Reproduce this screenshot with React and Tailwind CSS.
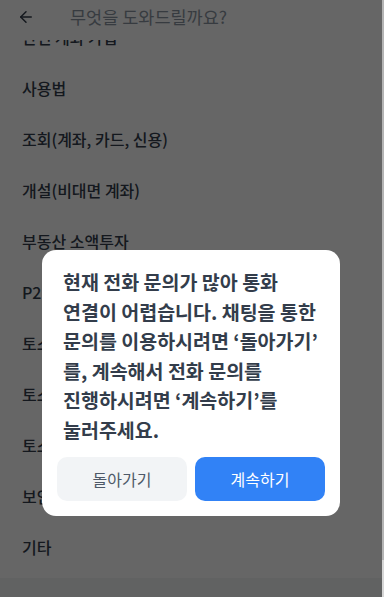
import { ArrowLeft } from 'lucide-react';

const menuItems = [
  '간편 계좌 가입',
  '사용법',
  '조회(계좌, 카드, 신용)',
  '개설(비대면 계좌)',
  '부동산 소액투자',
  'P2P 투자',
  '토스 카드',
  '토스 보험',
  '토스 증권',
  '보안 및 인증',
  '기타',
];

const App = () => {
  return (
    <div
      className="relative h-[597px] w-[384px] overflow-hidden bg-white"
      style={{ fontFamily: '"Noto Sans CJK KR", "Noto Sans", sans-serif' }}
    >
      {/* page */}
      <div className="flex h-full flex-col">
        <div className="relative z-10 flex h-[40px] shrink-0 items-center bg-white pb-[6px] pl-[17px]">
          <ArrowLeft size={18} strokeWidth={2} className="text-[#333d4b]" />
          <span className="ml-[35px] text-[17.5px] text-[#8b95a1]">무엇을 도와드릴까요?</span>
        </div>

        <div className="flex-1 overflow-hidden">
          <ul className="-mt-[29px]">
            {menuItems.map((item) => (
              <li
                key={item}
                className="flex h-[51px] items-center pl-[22px] text-[16px] font-medium text-[#333d4b]"
              >
                {item}
              </li>
            ))}
          </ul>
        </div>

        <div className="h-[19px] shrink-0 bg-[#f2f4f6]" />
      </div>

      {/* dimmed overlay + dialog */}
      <div className="absolute inset-0 z-20 flex justify-center bg-black/60 pr-[2px] pt-[250px]">
        <div className="h-fit w-[298px] rounded-[14px] bg-white px-[15px] pb-[15px] pt-[17px]">
          <p className="px-[6px] text-[19.5px] font-bold leading-[29.6px] text-[#333d4b]">
            현재 전화 문의가 많아 통화
            <br />
            연결이 어렵습니다. 채팅을 통한
            <br />
            문의를 이용하시려면 ‘돌아가기’
            <br />
            를, 계속해서 전화 문의를
            <br />
            진행하시려면 ‘계속하기’를
            <br />
            눌러주세요.
          </p>
          <div className="mt-[12px] flex gap-[8px]">
            <button className="h-[44px] flex-1 rounded-[10px] bg-[#f2f4f6] text-[16px] text-[#4e5968]">
              돌아가기
            </button>
            <button className="h-[44px] flex-1 rounded-[10px] bg-[#3182f6] text-[16px] text-white">
              계속하기
            </button>
          </div>
        </div>
      </div>

      {/* scrollbar */}
      <div className="absolute right-0 top-0 z-30 flex h-full w-[2px] flex-col justify-end bg-[#b4b4b4]">
        <div className="h-[37px] w-full bg-[#d6d6d6]" />
      </div>
    </div>
  );
};

export default App;
